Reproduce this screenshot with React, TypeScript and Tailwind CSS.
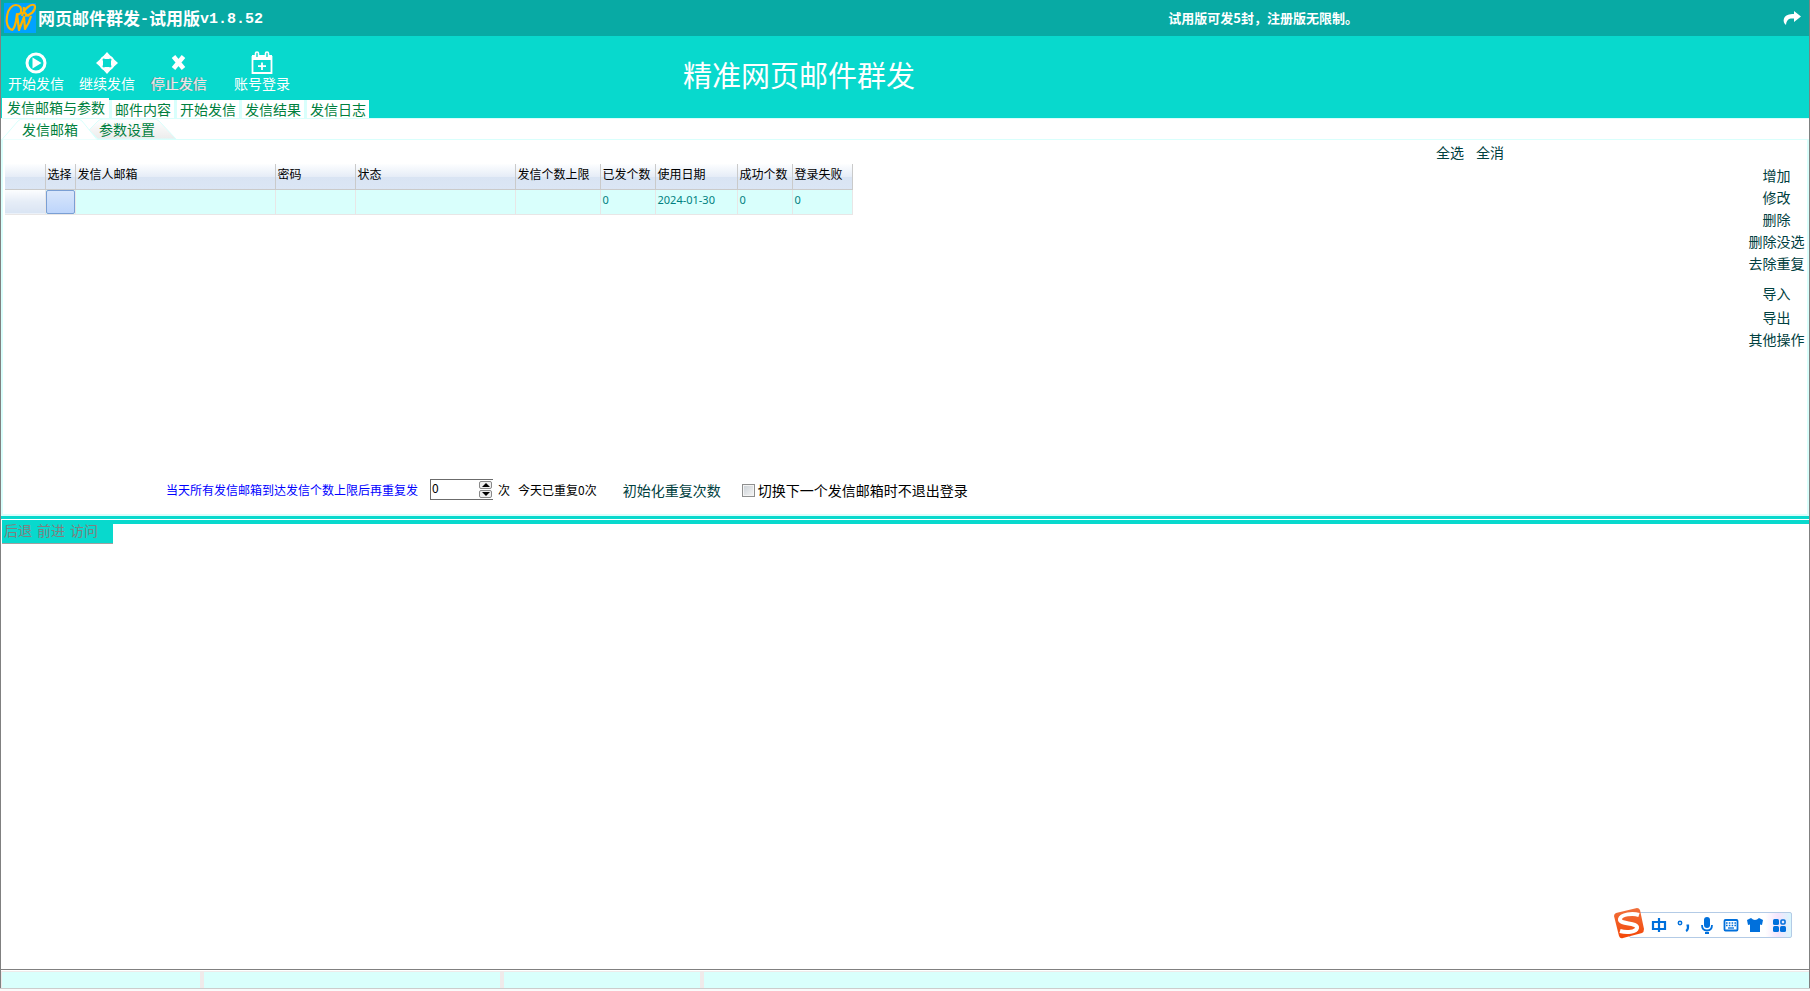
import { useState } from "react";
import clsx from "clsx";

const TEAL = "#08d9cd";

const TABS = ["发信邮箱与参数", "邮件内容", "开始发信", "发信结果", "发信日志"];

const COLUMNS = [
  { label: "", width: "w-[40px]", value: "" },
  { label: "选择", width: "w-[30px]", value: "" },
  { label: "发信人邮箱", width: "w-[200px]", value: "" },
  { label: "密码", width: "w-[80px]", value: "" },
  { label: "状态", width: "w-[160px]", value: "" },
  { label: "发信个数上限", width: "w-[85px]", value: "" },
  { label: "已发个数", width: "w-[55px]", value: "0" },
  { label: "使用日期", width: "w-[82px]", value: "2024-01-30" },
  { label: "成功个数", width: "w-[55px]", value: "0" },
  { label: "登录失败", width: "w-[60px]", value: "0" },
];

const ACTIONS = [
  { label: "增加" },
  { label: "修改" },
  { label: "删除" },
  { label: "删除没选" },
  { label: "去除重复" },
  { label: "导入", gap: "mt-2" },
  { label: "导出", gap: "mt-0.5" },
  { label: "其他操作" },
];

function LogoIcon() {
  return (
    <svg viewBox="0 0 32 30" className="h-[30px] w-8" aria-hidden>
      <rect width="32" height="30" fill="#00a2ff" />
      <g fill="none" stroke="#ffb400" strokeWidth="2.2" strokeLinejoin="round">
        <path d="M9 27C3 26 2 19 3 13 4 6 8 2 12 2c4 0 6 3 5 8l-4 2" />
        <path d="M8 27c3-2 3-5 4-9l1-7 2 16 5-13 1 12c3-4 5-9 6-13" />
        <path d="M18 13c1-4 3-7 6-9 3-3 7-3 7 0 0 4-4 8-10 9M20 4c-1 4 1 8 5 9" />
      </g>
    </svg>
  );
}

function PlayIcon() {
  return (
    <svg viewBox="0 0 22 22" className="size-[22px]" aria-hidden>
      <circle cx="11" cy="11" r="9" fill="none" stroke="#fff" strokeWidth="3" />
      <path d="M7.5 5.5 16.5 11l-9 5.5z" fill="#fff" />
    </svg>
  );
}

function MoveIcon() {
  return (
    <svg viewBox="0 0 22 22" className="size-[22px]" aria-hidden>
      <circle cx="11" cy="11" r="6.8" fill="none" stroke="#fff" strokeWidth="2" strokeDasharray="7 3.68" strokeDashoffset="-1.84" />
      <path d="M11 0l4 4.5V6l-2 1H9L7 6V4.500zM11 22l-4-4.500V16l2-1h4l2 1v1.500zM0 11l4.500-4H6l1 2v4l-1 2H4.500zM22 11l-4.500 4H16l-1-2V9l1-2h1.500z" fill="#fff" />
    </svg>
  );
}

function StopIcon() {
  return (
    <svg viewBox="0 0 22 22" className="size-[22px]" aria-hidden>
      <path d="M5.500 4.500l10 12M15.500 4.500l-10 12" stroke="#fff" strokeWidth="4.600" />
    </svg>
  );
}

function CalendarIcon() {
  return (
    <svg viewBox="0 0 22 24" className="h-6 w-[22px]" aria-hidden>
      <path d="M1.500 5v17h19V5" fill="none" stroke="#fff" strokeWidth="1.800" />
      <path d="M1 4h20v5H1z" fill="#fff" />
      <path d="M4.500 6V2.500a1.500 1.500 0 0 1 3 0V6M14.500 6V2.500a1.500 1.500 0 0 1 3 0V6" fill={TEAL} stroke="#fff" strokeWidth="1.600" />
      <path d="M11 11.500v7.500M7 15.200h8" stroke="#fff" strokeWidth="1.800" />
    </svg>
  );
}

function ShareIcon() {
  return (
    <svg viewBox="0 0 18 14" className="h-3.5 w-[18px]" aria-hidden>
      <path d="M11 0l7 5.500L11 11V7.500C6 7 3.500 8.500 3 14 1 12.500 0 10 1 7.500 2.500 4 6 3 11 3z" fill="#fff" />
    </svg>
  );
}

const TOOLS = [
  { label: "开始发信", icon: <PlayIcon />, style: "text-white" },
  { label: "继续发信", icon: <MoveIcon />, style: "text-white" },
  { label: "停止发信", icon: <StopIcon />, style: "ml-px text-[#f4e4e4] [text-shadow:-1px_0_0_#a58f95]" },
  { label: "账号登录", icon: <CalendarIcon />, style: "ml-3 text-white" },
];

function TitleBar() {
  return (
    <header className="flex h-9 items-center bg-[#08aaa4] pl-[3px] pr-2 font-bold text-white">
      <LogoIcon />
      <h1 className="ml-0.5 flex items-center text-[17px] leading-6">
        网页邮件群发
        <span className="pt-1 font-['Liberation_Mono'] text-[15px] leading-5">-</span>
        试用版
        <span className="pt-1 font-['Liberation_Mono'] text-[15px] leading-5">v1.8.52</span>
      </h1>
      <p className="ml-auto text-[13px] leading-5">试用版可发5封，注册版无限制。</p>
      <button type="button" aria-label="分享" className="ml-[425px]">
        <ShareIcon />
      </button>
    </header>
  );
}

function Toolbar() {
  return (
    <div className="flex h-[62px] items-start bg-[#08d9cd] pl-[7px]">
      <div className="flex gap-[15px] pt-4">
        {TOOLS.map((t) => (
          <button
            key={t.label}
            type="button"
            className={clsx("flex flex-col items-center text-sm leading-[18px]", t.style)}
          >
            <span className="flex h-[22px] items-center">{t.icon}</span>
            {t.label}
          </button>
        ))}
      </div>
      <p className="ml-[393px] pt-3 text-[29px] leading-[52px] text-white">精准网页邮件群发</p>
    </div>
  );
}

function SubTabs() {
  return (
    <nav className="relative flex h-[22px] border-t border-b border-[#d9fffc] pl-[21px] text-sm leading-5 text-[#007f3e]">
      <svg viewBox="0 0 180 22" className="absolute -top-px left-0 h-[22px] w-[180px]" aria-hidden>
        <defs>
          <linearGradient id="idleTab" x1="0" y1="0" x2="0" y2="1">
            <stop offset="0" stopColor="#fff" />
            <stop offset="1" stopColor="#ececec" />
          </linearGradient>
        </defs>
        <path d="M88 12l9-9q2-2 5-2h51q3 0 5 2l17 18H97z" fill="url(#idleTab)" stroke="#d9fffc" />
        <path d="M1 21.500L17 3q2-2 5-2h54q3 0 5 2l15 18.500" fill="#fff" stroke="#d9fffc" />
      </svg>
      <button type="button" className="relative">发信邮箱</button>
      <button type="button" className="relative ml-[21px]">参数设置</button>
    </nav>
  );
}

function AccountTable() {
  return (
    <table className="w-[847px] table-fixed border-collapse text-left text-xs">
      <thead>
        <tr className="h-[25px] bg-[linear-gradient(#fdfeff,#e6edf7_50%,#d9e4f3_52%,#dbe6f5)]">
          {COLUMNS.map((c, i) => (
            <th
              key={i}
              scope="col"
              className={clsx(
                "overflow-hidden border-r border-b border-[#cacaca] p-0 pb-1 pl-[2px] font-normal whitespace-nowrap text-black",
                c.width
              )}
            >
              {c.label}
            </th>
          ))}
        </tr>
      </thead>
      <tbody>
        <tr className="h-[25px] bg-[#d9fffc]">
          {COLUMNS.map((c, i) => (
            <td
              key={i}
              className={clsx(
                "border-r border-b border-[#e8e6e6] p-0 font-['Noto_Sans'] text-[11px] leading-4 text-[#007f80]",
                i === 0 && "bg-[linear-gradient(#fdfeff,#e6edf7_50%,#d9e4f3)]",
                i > 1 && "pb-1 pl-[2px]"
              )}
            >
              {i === 1 ? (
                <button
                  type="button"
                  aria-label="选择"
                  className="block h-6 w-[29px] rounded-[2px] border border-[#7a9fd4] bg-[linear-gradient(#d8e6fb,#bdd5fb)]"
                />
              ) : (
                c.value
              )}
            </td>
          ))}
        </tr>
      </tbody>
    </table>
  );
}

function RepeatSettings() {
  const [count, setCount] = useState(0);
  const [keepLogin, setKeepLogin] = useState(false);

  return (
    <div className="flex h-9 items-start pl-[163px] text-xs leading-6 text-black">
      <label htmlFor="repeat" className="text-[#0000ff]">
        当天所有发信邮箱到达发信个数上限后再重复发
      </label>
      <div className="mt-px ml-3 flex h-[21px] w-[63px] border border-r-0 border-[#6b6b6b] bg-white">
        <input
          id="repeat"
          value={count}
          onChange={(e) => setCount(Number(e.target.value) || 0)}
          className="h-4 min-w-0 flex-1 pl-px text-xs leading-4 outline-none"
        />
        <div className="flex w-[14px] flex-col justify-center gap-px">
          <button
            type="button"
            aria-label="加"
            onClick={() => setCount(count + 1)}
            className="flex h-2 w-[13px] items-center justify-center rounded-[2px] border border-[#888] bg-[#eee]"
          >
            <svg viewBox="0 0 8 4" className="h-1 w-2" aria-hidden><path d="M0 4l4-4 4 4z" /></svg>
          </button>
          <button
            type="button"
            aria-label="减"
            onClick={() => setCount(Math.max(0, count - 1))}
            className="flex h-2 w-[13px] items-center justify-center rounded-[2px] border border-[#888] bg-[#eee]"
          >
            <svg viewBox="0 0 8 4" className="h-1 w-2" aria-hidden><path d="M0 0l4 4 4-4z" /></svg>
          </button>
        </div>
      </div>
      <span className="ml-[5px]">次</span>
      <span className="ml-2">今天已重复0次</span>
      <button type="button" className="ml-[26px] text-sm leading-6 text-[#004040]">
        初始化重复次数
      </button>
      <label className="ml-[21px] flex items-center text-sm leading-6">
        <input
          type="checkbox"
          checked={keepLogin}
          onChange={(e) => setKeepLogin(e.target.checked)}
          className="mr-[3px] size-[13px] appearance-none border border-[#8e8f8f] bg-[linear-gradient(135deg,#c9cfd5,#f6f6f6)] shadow-[inset_0_0_0_1px_#f4f4f4] checked:bg-[#3a6ea5]"
        />
        切换下一个发信邮箱时不退出登录
      </label>
    </div>
  );
}

function ImeBar() {
  return (
    <div className="absolute right-[18px] bottom-[53px] flex h-[26px] w-[163px] items-center rounded-[2px] border border-[#b3cbe6] bg-[linear-gradient(90deg,#fff_84%,#f4e4fc_92%,#d8f6fd)] pl-[17px] text-[#0070dc]">
      <svg viewBox="0 0 32 32" className="absolute -left-[17px] -top-[5px] size-8" aria-hidden>
        <defs>
          <linearGradient id="imeLogo" x1="0" y1="0" x2="0" y2="1">
            <stop offset="0" stopColor="#f0703c" />
            <stop offset="1" stopColor="#f44708" />
          </linearGradient>
        </defs>
        <path d="M3 5L24 0q2 0 3 2l4 19q0 3-2 4L10 30q-3 1-4-2L1 8q0-2 2-3z" fill="url(#imeLogo)" />
        <path d="M26 7C20 5 8 6 7 11c-1 6 18 3 17 9-1 4-10 5-17 3" fill="none" stroke="#fff" strokeWidth="4" />
      </svg>
      <svg viewBox="0 0 144 24" className="h-6 w-36 shrink-0" fill="none" stroke="currentColor" aria-hidden>
        <path d="M6 9h12v7H6zM12 5v14" strokeWidth="2.200" />
        <circle cx="33" cy="10" r="1.700" strokeWidth="1.500" />
        <path d="M39.500 12.500h1.500v1.500q0 3-2 4" strokeWidth="2.200" />
        <rect x="57" y="4" width="6" height="11" rx="3" fill="currentColor" stroke="none" />
        <path d="M55 12q0 5.500 5 5.500t5-5.500M58 20h4" strokeWidth="1.800" />
        <rect x="77.500" y="7" width="13" height="10.500" rx="1" strokeWidth="1.800" />
        <path d="M79 10h10M79 12.500h10" strokeWidth="1.500" strokeDasharray="1.600 1.200" />
        <path d="M81 15h6" strokeWidth="1.300" />
        <path d="M104 5q4 4 8 0l4 2-1 5-2-.500V19h-10v-7.500l-2 .500-1-5z" fill="currentColor" stroke="none" />
        <g fill="currentColor" stroke="none">
          <rect x="126" y="6" width="6" height="6" rx="1.500" />
          <rect x="126" y="13" width="6" height="6" rx="1.500" />
          <rect x="133" y="13" width="6" height="6" rx="1.500" />
        </g>
        <rect x="134" y="7" width="4" height="4" rx="1" strokeWidth="1.600" />
      </svg>
    </div>
  );
}

export default function App() {
  const [tab, setTab] = useState(0);

  return (
    <div className="relative flex min-h-screen flex-col bg-white font-['Noto_Sans_CJK_SC',sans-serif]">
      <div className="flex flex-1 flex-col border-x border-[#808080]">
        <TitleBar />
        <Toolbar />
        <nav className="flex h-5 items-end gap-[3px] bg-[#08d9cd] pl-px text-sm text-[#007f3e]">
          {TABS.map((label, i) => (
            <button
              key={label}
              type="button"
              onClick={() => setTab(i)}
              className={clsx(
                "bg-white leading-[18px]",
                i === tab ? "h-5 pr-1 pb-0.5 pl-[5px]" : "h-[18px] px-[3px] pb-px",
                i > 0 && "shadow-[-3px_0_0_#d9fffc]"
              )}
            >
              {label}
            </button>
          ))}
        </nav>

        <SubTabs />

        <main className="flex border-r-2 border-l-2 border-[#d9fffc] text-[#004040]">
          <div className="flex min-w-0 flex-1 flex-col">
            <div className="flex h-6 items-center justify-end gap-3 pr-[242px] text-sm leading-6">
              <button type="button">全选</button>
              <button type="button">全消</button>
            </div>
            <div className="min-h-[314px] pl-[2px]">
              <AccountTable />
            </div>
            <RepeatSettings />
          </div>
          <aside className="flex w-[61px] flex-col items-center pt-6 text-sm">
            {ACTIONS.map((a) => (
              <button key={a.label} type="button" className={clsx("leading-[22px]", a.gap)}>
                {a.label}
              </button>
            ))}
          </aside>
        </main>

        <div className="h-[5px] border-t-2 border-[#d9fffc] bg-[#08d9cd]" />
        <section className="mt-px flex flex-1 items-start pl-px">
          <div className="flex h-6 w-[111px] items-start gap-[5px] border-b border-[#a0a0a0] bg-[#08d9cd] pl-[2px] text-sm leading-[21px] text-[#808080]">
            <button type="button">后退</button>
            <button type="button">前进</button>
            <button type="button">访问</button>
          </div>
          <div className="h-1 flex-1 bg-[#08d9cd]" />
        </section>

        <footer className="border-t border-[#808080] pt-px">
          <div className="flex h-[17px] gap-1 border-t border-[#efeaea] bg-[#efeaea] pl-px">
            <div className="w-[198px] bg-[#d9fffc]" />
            <div className="w-[296px] bg-[#d9fffc]" />
            <div className="w-[196px] bg-[#d9fffc]" />
            <div className="flex-1 bg-[#d9fffc]" />
          </div>
        </footer>
      </div>
      <div className="h-[3px] border-t border-[#cccccc] bg-[#fafafa]" />
      <ImeBar />
    </div>
  );
}
